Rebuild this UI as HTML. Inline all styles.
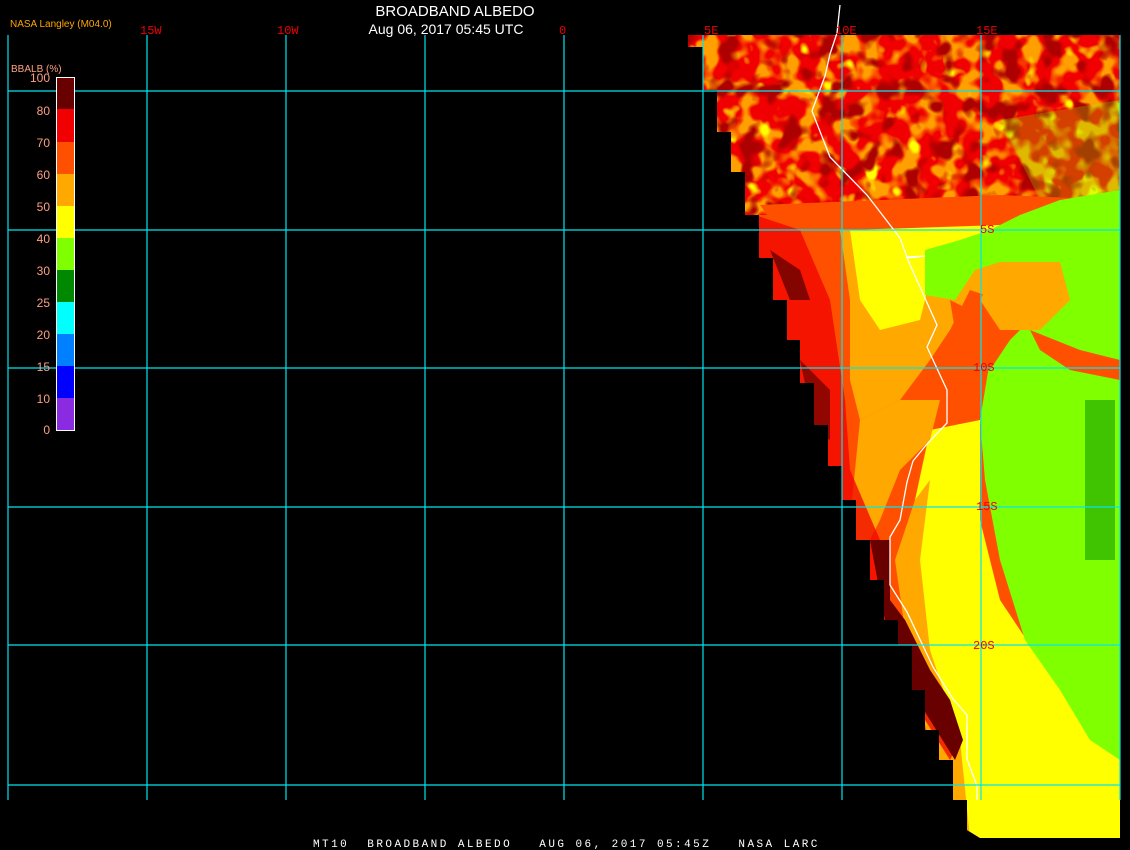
<!DOCTYPE html>
<html><head><meta charset="utf-8"><style>
html,body{margin:0;padding:0;background:#000;width:1130px;height:850px;overflow:hidden}
svg{display:block}
text{font-family:"Liberation Sans",sans-serif}
.m{font-family:"Liberation Mono",monospace}
</style></head><body>
<svg width="1130" height="850" viewBox="0 0 1130 850" xmlns="http://www.w3.org/2000/svg">
<defs>
<clipPath id="land"><polygon points="688,35 1120,35 1120,838 980,838 967,830 967,800 953,800 953,760 939,760 939,730 925,730 925,690 912,690 912,645 898,645 898,620 884,620 884,580 870,580 870,540 856,540 856,500 842,500 842,466 828,466 828,425 814,425 814,383 800,383 800,340 787,340 787,300 773,300 773,258 759,258 759,215 745,215 745,172 731,172 731,132 717,132 717,90 703,90 703,47 688,47"/></clipPath>
<filter id="n" x="0" y="0" width="100%" height="100%"><feTurbulence type="fractalNoise" baseFrequency="0.05" numOctaves="2" seed="3"/><feColorMatrix type="matrix" values="0 0 0 0 0.42 0 0 0 0 0 0 0 0 0 0 0 0 0 -6 2.9"/></filter>
<filter id="n2" x="0" y="0" width="100%" height="100%"><feTurbulence type="fractalNoise" baseFrequency="0.05" numOctaves="2" seed="9"/><feColorMatrix type="matrix" values="0 0 0 0 1 0 0 0 0 1 0 0 0 0 0 0 0 0 -7 2.5"/></filter>
<filter id="n3" x="0" y="0" width="100%" height="100%"><feTurbulence type="fractalNoise" baseFrequency="0.05" numOctaves="2" seed="21"/><feColorMatrix type="matrix" values="0 0 0 0 1 0 0 0 0 0.35 0 0 0 0 0 0 0 0 6 -2.8"/></filter>
</defs>
<g clip-path="url(#land)">
<rect x="680" y="30" width="450" height="820" fill="#ff5000"/>
<rect x="680" y="30" width="450" height="185" fill="#f00000"/>
<rect x="680" y="30" width="450" height="185" filter="url(#n3)"/>
<rect x="680" y="30" width="450" height="185" filter="url(#n2)"/>
<rect x="680" y="30" width="450" height="185" filter="url(#n)"/>
<polygon points="1000,120 1120,100 1120,200 1040,200" fill="#80ff00" opacity="0.25"/>
<polygon points="760,205 1000,195 1120,200 1120,260 1000,260 960,240 850,240 800,260" fill="#ff5000"/>
<polygon points="840,230 960,230 1000,250 1000,300 970,290 950,330 930,360 900,400 860,420 850,380 850,300" fill="#ffa800"/>
<polygon points="850,230 1000,225 1000,250 960,250 930,280 920,320 880,330 860,300" fill="#ffff00"/>
<polygon points="930,430 980,420 980,520 1000,600 1040,660 1090,730 1120,760 1120,838 967,838 960,760 940,700 910,630 900,560 915,500" fill="#ffff00"/>
<polygon points="860,420 900,400 940,400 930,440 900,470 880,520 860,560 850,520" fill="#ffa800"/>
<polygon points="895,560 915,500 930,480 920,560 930,650 960,740 970,838 950,838 935,760 915,690 905,630" fill="#ffa800"/>
<polygon points="1120,190 1060,200 1020,215 990,230 960,240 925,250 925,295 955,300 975,270 1000,262 1050,262 1060,300 1020,330 990,360 980,420 985,480 1000,560 1025,640 1060,690 1090,740 1120,760" fill="#80ff00"/>
<polygon points="1000,262 1060,262 1070,300 1040,330 1000,330 980,300" fill="#ffa800"/>
<polygon points="950,300 990,320 1010,340 990,370 960,360" fill="#ff5000"/>
<polygon points="1030,330 1080,350 1120,360 1120,380 1070,370 1040,350" fill="#ff5000"/>
<rect x="1085" y="400" width="30" height="160" fill="#008800" opacity="0.5"/>
<polygon points="740,210 800,230 830,300 845,400 850,470 880,540 885,600 905,620 930,670 950,700 960,740 950,760 925,720 900,690 870,600 830,500 790,400 760,300" fill="#f00000" opacity="0.75"/>
<polygon points="770,250 800,270 810,300 790,300" fill="#680000" opacity="0.8"/>
<polygon points="800,360 830,390 830,440 815,430" fill="#680000" opacity="0.7"/>
<polygon points="870,540 890,540 890,600 905,620 930,670 950,700 963,740 955,760 930,720 905,680 885,620" fill="#680000"/>
</g>
<polyline points="840,5 837,33 830,54 825,76 812,111 830,157 867,195 900,238 907,257 925,256 907,258 937,325 927,347 947,390 947,423 927,444 913,461 907,482 900,520 890,537 890,585 907,612 933,667 953,699 967,715 967,759 977,786 977,800" fill="none" stroke="#fff" stroke-width="1.3"/>
<g stroke="#00e5ee" stroke-width="1.2">
<line x1="8" y1="35" x2="8" y2="800"/><line x1="147" y1="35" x2="147" y2="800"/><line x1="286" y1="35" x2="286" y2="800"/><line x1="425" y1="35" x2="425" y2="800"/><line x1="564" y1="35" x2="564" y2="800"/><line x1="703" y1="35" x2="703" y2="800"/><line x1="842" y1="35" x2="842" y2="800"/><line x1="981" y1="35" x2="981" y2="800"/><line x1="1120" y1="35" x2="1120" y2="800"/>
<line x1="8" y1="91" x2="1120" y2="91"/><line x1="8" y1="230" x2="1120" y2="230"/><line x1="8" y1="368" x2="1120" y2="368"/><line x1="8" y1="507" x2="1120" y2="507"/><line x1="8" y1="645" x2="1120" y2="645"/><line x1="8" y1="785" x2="1120" y2="785"/>
</g>
<text x="455" y="16" fill="#fff" font-size="15" text-anchor="middle">BROADBAND ALBEDO</text>
<text x="446" y="34" fill="#fff" font-size="14" text-anchor="middle">Aug 06, 2017 05:45 UTC</text>
<text x="10" y="27" fill="#ffa500" font-size="10">NASA Langley (M04.0)</text>
<g class="m" fill="#f00000" font-size="12">
<text x="140" y="34" class="m">15W</text><text x="277" y="34" class="m">10W</text><text x="559" y="34" class="m">0</text><text x="704" y="34" class="m">5E</text><text x="835" y="34" class="m">10E</text><text x="976" y="34" class="m">15E</text>
<text x="980" y="233" class="m">5S</text><text x="973" y="371" class="m">10S</text><text x="976" y="510" class="m">15S</text><text x="973" y="649" class="m">20S</text>
</g>
<text x="11" y="72" fill="#ffa080" font-size="10">BBALB (%)</text>
<rect x="56.5" y="77.5" width="18" height="353" fill="none" stroke="#fff"/>
<rect x="57" y="78" width="17" height="31" fill="#680000"/>
<rect x="57" y="109" width="17" height="33" fill="#f00000"/>
<rect x="57" y="142" width="17" height="32" fill="#ff5000"/>
<rect x="57" y="174" width="17" height="32" fill="#ffa800"/>
<rect x="57" y="206" width="17" height="32" fill="#ffff00"/>
<rect x="57" y="238" width="17" height="32" fill="#80ff00"/>
<rect x="57" y="270" width="17" height="32" fill="#008800"/>
<rect x="57" y="302" width="17" height="32" fill="#00ffff"/>
<rect x="57" y="334" width="17" height="32" fill="#0080ff"/>
<rect x="57" y="366" width="17" height="32" fill="#0000ff"/>
<rect x="57" y="398" width="17" height="32" fill="#8a2be2"/>
<g fill="#ffa080" font-size="12" text-anchor="end">
<text x="50" y="82">100</text><text x="50" y="115">80</text><text x="50" y="147">70</text><text x="50" y="179">60</text><text x="50" y="211">50</text><text x="50" y="243">40</text><text x="50" y="275">30</text><text x="50" y="307">25</text><text x="50" y="339">20</text><text x="50" y="371">15</text><text x="50" y="403">10</text><text x="50" y="434">0</text>
</g>
<text x="313" y="847" fill="#fff" font-size="11" class="m" letter-spacing="2.45" xml:space="preserve">MT10  BROADBAND ALBEDO   AUG 06, 2017 05:45Z   NASA LARC</text>
</svg>
</body></html>
